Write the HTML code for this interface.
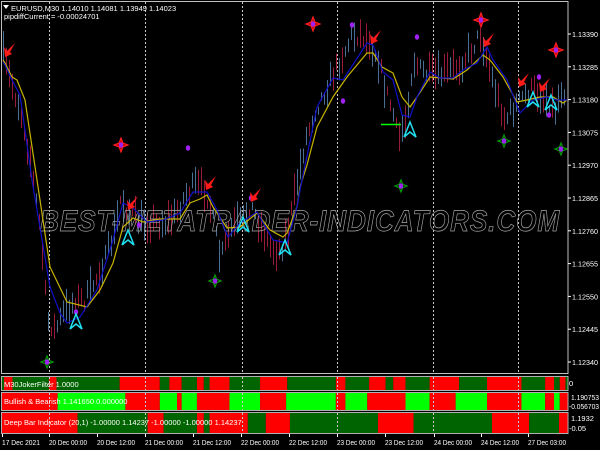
<!DOCTYPE html>
<html><head><meta charset="utf-8"><style>
html,body{margin:0;padding:0;background:#000;width:600px;height:450px;overflow:hidden}
svg{display:block}
text{font-family:"Liberation Sans",sans-serif}
</style></head><body>
<svg id="s" width="600" height="450" xmlns="http://www.w3.org/2000/svg">
<rect width="600" height="450" fill="#000"/>
<g id="grid"></g>
<g id="bars"></g>
<text x="40" y="231" font-size="30" font-style="italic" font-weight="bold" fill="none" stroke="#a8a8a8" stroke-width="0.7" textLength="520" lengthAdjust="spacingAndGlyphs" letter-spacing="1">BEST-METATRADER-INDICATORS.COM</text>
<g id="lines"></g>
<g id="marks"></g>
<g id="panels"></g>
<rect x="1.5" y="1.5" width="566.5" height="372" fill="none" stroke="#c0c0c0" stroke-width="1"/>
<polygon points="3,5 9,5 6,9" fill="#fff"/>
<text x="11" y="11" font-size="7.5" fill="#fff">EURUSD,M30  1.14010 1.14081 1.13949 1.14023</text>
<text x="4" y="19" font-size="7.5" fill="#fff">pipdiffCurrent = -0.00024701</text>
<g id="axis" font-size="7.5" fill="#fff"></g>
</svg>
<script>
var NS="http://www.w3.org/2000/svg";
function el(p,t,a,txt){var e=document.createElementNS(NS,t);for(var k in a)e.setAttribute(k,a[k]);if(txt!=null)e.textContent=txt;document.getElementById(p).appendChild(e);return e;}
function interp(pts,x){for(var i=0;i<pts.length-1;i++){if(x>=pts[i][0]&&x<=pts[i+1][0]){var t=(x-pts[i][0])/(pts[i+1][0]-pts[i][0]);return pts[i][1]+t*(pts[i+1][1]-pts[i][1]);}}return x<pts[0][0]?pts[0][1]:pts[pts.length-1][1];}
var seed=7;function rnd(){seed=(seed*16807)%2147483647;return seed/2147483647;}
[49,145,242,337,433,518].forEach(function(x){el("grid","line",{x1:x+.5,y1:2,x2:x+.5,y2:373,stroke:"#c8c8c8","stroke-width":1,"stroke-dasharray":"2,2"});});
var cp=[[3,55],[10,80],[20,110],[30,160],[40,230],[47,320],[55,330],[65,310],[75,300],[85,300],[95,280],[105,260],[115,230],[120,200],[128,210],[140,222],[150,222],[165,222],[175,215],[185,195],[195,185],[205,190],[212,215],[220,260],[230,230],[240,220],[250,205],[262,230],[272,250],[280,250],[288,230],[295,190],[305,140],[315,110],[325,90],[335,70],[345,50],[352,35],[360,35],[370,40],[378,60],[385,90],[392,110],[398,140],[405,120],[413,60],[420,70],[430,75],[440,75],[450,70],[460,65],[470,50],[480,35],[487,60],[495,90],[505,120],[512,110],[520,100],[530,90],[540,95],[548,100],[555,110],[560,90],[566,90]];
for(var x=3;x<567;x+=3){var c=interp(cp,x)+(rnd()-.5)*16;var h=8+rnd()*26;var up=interp(cp,x+4)<interp(cp,x-2)?rnd()<.7:rnd()<.3;
el("bars","rect",{x:x,y:c-h/2,width:1,height:h,fill:up?"#4a6f95":"#9a1a38"});}
function pl(pts,col){el("lines","polyline",{points:pts.map(function(p){return p.join(",")}).join(" "),fill:"none",stroke:col,"stroke-width":1.2});}
pl([[3,60],[5,63],[12,77],[17,80],[25,100],[37,180],[50,267],[67,302],[87,307],[100,290],[113,263],[123,227],[133,218],[143,222],[160,219],[180,219],[190,203],[200,199],[207,195],[213,207],[227,228],[240,227],[257,213],[270,230],[283,237],[287,233],[297,207],[300,187],[307,165],[317,127],[333,97],[347,77],[367,53],[373,53],[382,67],[393,73],[402,97],[410,107],[417,97],[430,77],[453,79],[467,70],[483,55],[490,60],[503,77],[517,102],[527,100],[540,97],[553,97],[563,103],[567,100]],"#c8b400");
pl([[3,62],[5,65],[12,80],[20,95],[32,180],[50,287],[60,313],[67,323],[80,317],[97,290],[113,240],[123,203],[133,208],[147,222],[163,220],[180,213],[193,192],[207,192],[217,210],[228,237],[240,223],[257,212],[273,240],[287,243],[297,207],[300,190],[317,107],[333,78],[343,80],[367,43],[373,45],[383,72],[393,80],[402,115],[410,117],[417,97],[430,72],[440,78],[453,78],[463,70],[477,63],[487,47],[493,60],[507,80],[520,113],[533,100],[547,97],[557,100],[567,100]],"#1010c8");
el("lines","line",{x1:381,y1:124.5,x2:401,y2:124.5,stroke:"#00ff00","stroke-width":1.5});
function star(x,y,col,fill,r){var q=r*0.28;var p=[[x,y-r],[x+q,y-q],[x+r,y],[x+q,y+q],[x,y+r],[x-q,y+q],[x-r,y],[x-q,y-q]];
el("marks","polygon",{points:p.join(" "),fill:fill,stroke:col,"stroke-width":1.2});}
function dot(x,y){el("marks","ellipse",{cx:x,cy:y,rx:2.2,ry:2.8,fill:"#a020f0"});}
[[313,24],[481,20],[556,50],[121,145]].forEach(function(p){star(p[0],p[1],"#ff2020","#c00000",7);dot(p[0],p[1]);});
[[47,362],[215,281],[401,186],[504,141],[561,149]].forEach(function(p){star(p[0],p[1],"#00a000","none",6);dot(p[0],p[1]);});
[[352,25],[417,37],[343,101],[188,148],[139,225],[251,198],[539,77],[549,115],[76,312]].forEach(function(p){dot(p[0],p[1]);});
function rarrow(x,y){el("marks","polygon",{points:[x-4,y+7,x-5,y-3,x-2,y+1,x+6,y-7,x+1,y+2,x+3,y+4].join(","),fill:"#ff1a1a"});}
[[9,50],[132,203],[210,183],[255,195],[375,37],[488,40],[523,80],[544,85]].forEach(function(p){rarrow(p[0],p[1]);});
function carrow(x,y){el("marks","polyline",{points:[x-6,y+7,x,y-8,x+6,y+7,x,y+2,x-6,y+7].join(","),fill:"none",stroke:"#20e0f0","stroke-width":1.5});}
[[76,322],[128,238],[243,225],[285,248],[410,130],[533,100],[551,103]].forEach(function(p){carrow(p[0],p[1]);});
var DG="#006400",R="#ff0000",L="#00ff00",k=2.613;
function panel(y,h,segs){segs.forEach(function(s){var x1=1+s[0]/k,x2=1+s[1]/k;el("panels","rect",{x:x1,y:y,width:x2-x1,height:h,fill:s[2]});});
el("panels","rect",{x:1.5,y:y-.5,width:566.5,height:h+1,fill:"none",stroke:"#b0b0b0","stroke-width":1});}
panel(377,13,[[0,8,DG],[8,30,R],[30,125,DG],[125,145,R],[145,180,DG],[180,310,DG],[310,415,R],[415,440,DG],[440,472,R],[472,512,DG],[512,530,R],[530,545,DG],[545,597,R],[597,677,DG],[677,748,R],[748,875,DG],[875,900,R],[900,962,DG],[962,1005,R],[1005,1025,DG],[1025,1057,R],[1057,1120,DG],[1120,1197,R],[1197,1270,DG],[1270,1360,R],[1360,1422,DG],[1422,1445,R],[1445,1460,DG],[1460,1475,R],[1475,1482,DG]]);
panel(393,17,[[0,148,R],[148,325,L],[325,415,R],[415,460,L],[460,472,R],[472,512,L],[512,597,R],[597,677,L],[677,745,R],[745,875,L],[875,900,R],[900,957,L],[957,1057,R],[1057,1120,L],[1120,1188,R],[1188,1270,L],[1270,1360,R],[1360,1422,L],[1422,1445,R],[1445,1460,L],[1460,1482,R]]);
panel(413,20,[[0,200,R],[200,383,DG],[383,425,R],[425,512,DG],[512,530,R],[530,545,DG],[545,645,R],[645,692,DG],[692,755,R],[755,985,DG],[985,1078,R],[1078,1283,DG],[1283,1380,R],[1380,1458,DG],[1458,1482,R]]);
[49,145,242,337,433,518].forEach(function(x){[[377,390],[393,410],[413,433]].forEach(function(r){el("panels","line",{x1:x+.5,y1:r[0],x2:x+.5,y2:r[1],stroke:"#c8c8c8","stroke-dasharray":"2,2"});});});
el("panels","text",{x:4,y:387,"font-size":"7.5",fill:"#fff"},"M30JokerFilter 1.0000");
el("panels","text",{x:4,y:404,"font-size":"7.5",fill:"#fff"},"Bullish & Bearish 1.141650 0.000000");
el("panels","text",{x:4,y:425,"font-size":"7.5",fill:"#fff"},"Deep Bar Indicator (20,1) -1.00000 1.14237 -1.00000 -1.00000 1.14237");
var labs=["1.13390","1.13285","1.13180","1.13075","1.12970","1.12865","1.12760","1.12655","1.12550","1.12445","1.12340"];
labs.forEach(function(l,i){var y=34+i*32.8;el("axis","line",{x1:568,y1:y,x2:571,y2:y,stroke:"#fff"});el("axis","text",{x:572,y:y+3,textLength:26,lengthAdjust:"spacingAndGlyphs"},l);});
el("axis","text",{x:569,y:386},"0");
el("axis","text",{x:571,y:400,textLength:28,lengthAdjust:"spacingAndGlyphs"},"1.190753");
el("axis","text",{x:569,y:409,textLength:30,lengthAdjust:"spacingAndGlyphs"},"-0.056703");
el("axis","text",{x:571,y:421},"1.1932");
el("axis","text",{x:569,y:431},"-0.05");
var d=[[2,"17 Dec 2021"],[49,"20 Dec 00:00"],[97,"20 Dec 12:00"],[145,"21 Dec 00:00"],[193,"21 Dec 12:00"],[241,"22 Dec 00:00"],[289,"22 Dec 12:00"],[337,"23 Dec 00:00"],[385,"23 Dec 12:00"],[434,"24 Dec 00:00"],[481,"24 Dec 12:00"],[528,"27 Dec 03:00"]];
d.forEach(function(p){el("axis","line",{x1:p[0]+.5,y1:434,x2:p[0]+.5,y2:437,stroke:"#fff"});el("axis","text",{x:p[0],y:445,textLength:38,lengthAdjust:"spacingAndGlyphs"},p[1]);});
</script>
</body></html>
